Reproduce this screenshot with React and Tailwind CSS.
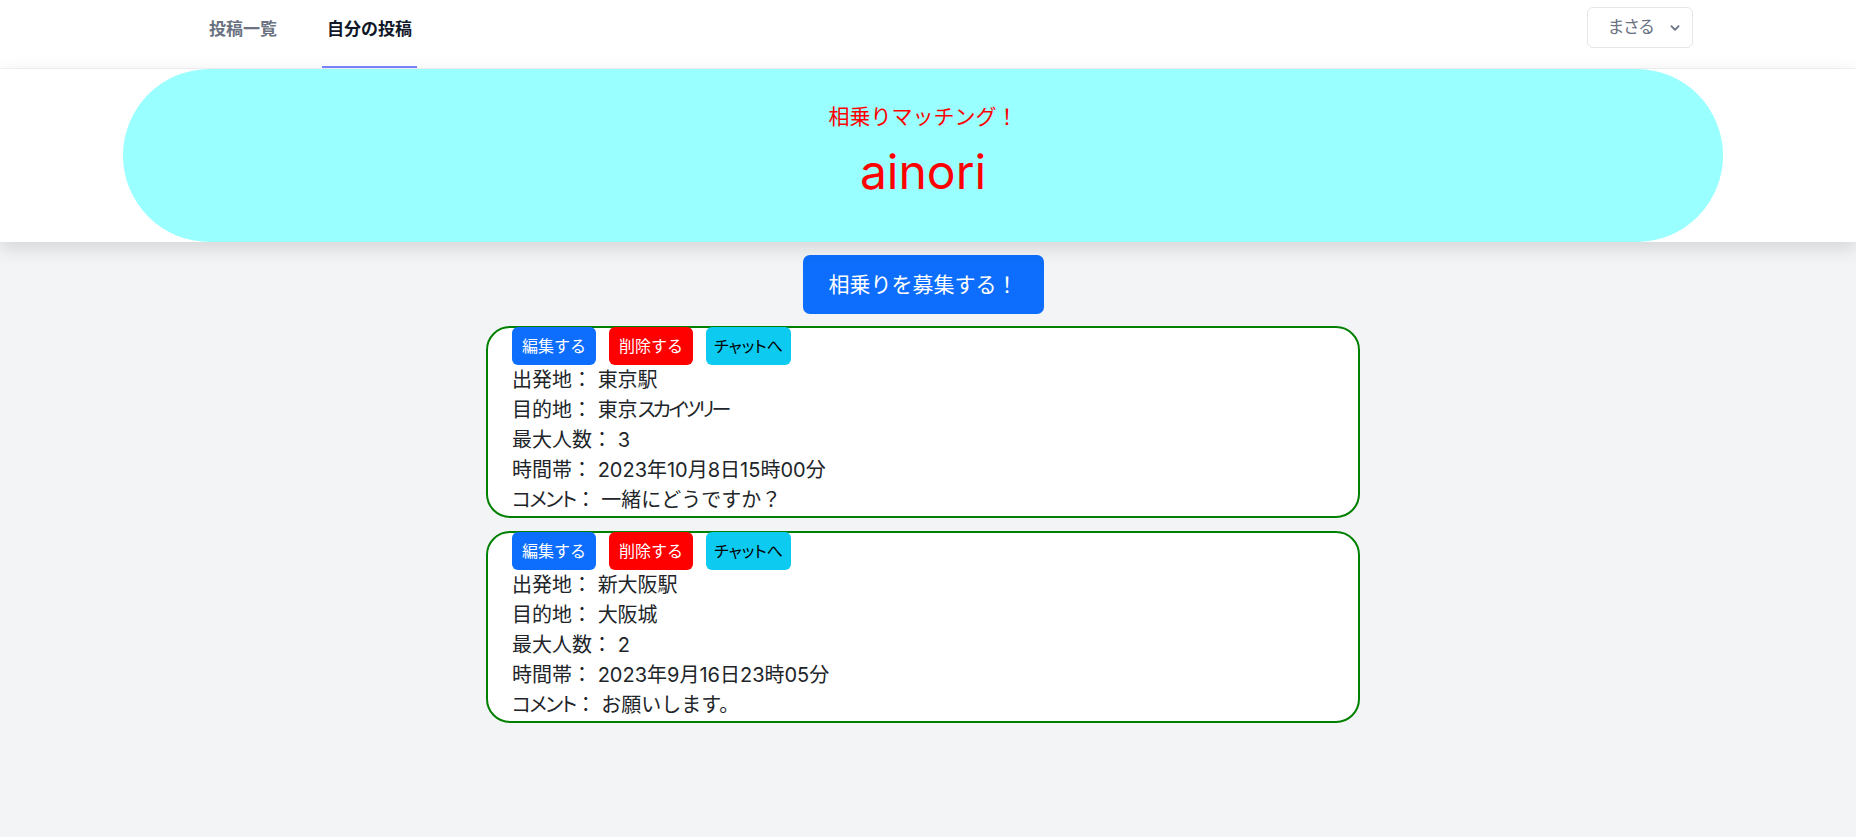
import React from "react";

const posts = [
  { from: "東京駅", toKanji: "東京", toKana: "スカイツリー", max: "3", time: "2023年10月8日15時00分", comment: "一緒にどうですか？" },
  { from: "新大阪駅", toKanji: "大阪城", toKana: "", max: "2", time: "2023年9月16日23時05分", comment: "お願いします。" },
];

function Row({ label, children, labelKana }) {
  return (
    <div className="h-[30px] leading-[30px] whitespace-pre">
      <span className={labelKana ? "tracking-[-1.5px] [font-feature-settings:'palt']" : ""}>{label}</span>
      <span>： </span>
      {children}
    </div>
  );
}

function Card({ p, className }) {
  return (
    <div className={"w-[874px] rounded-[24px] border-2 border-[#008000] bg-white pl-[24px] text-[20px] text-[#212529] " + className}>
      <div className="flex gap-[13px] -mt-[1px]">
        <button className="h-[38px] w-[84px] rounded-[6px] bg-[#0d6efd] text-[16px] text-white">編集する</button>
        <button className="h-[38px] w-[84px] rounded-[6px] bg-[#ff0000] text-[16px] text-white">削除する</button>
        <button className="h-[38px] w-[85px] rounded-[6px] bg-[#0dcaf0] text-[16px] text-black [font-feature-settings:'palt']">チャットへ</button>
      </div>
      <div className="pb-[1px]">
        <Row label="出発地">{p.from}</Row>
        <Row label="目的地">
          {p.toKanji}
          {p.toKana && <span className="tracking-[-3px] [font-feature-settings:'palt']">{p.toKana}</span>}
        </Row>
        <Row label="最大人数">{p.max}</Row>
        <Row label="時間帯">{p.time}</Row>
        <Row label="コメント" labelKana>{p.comment}</Row>
      </div>
    </div>
  );
}

export default function App() {
  return (
    <div className="min-h-screen bg-[#f3f4f6] [font-family:'Inter','Noto_Sans_CJK_JP',sans-serif]">
      <nav className="h-[69px] border-b border-gray-100 bg-white">
        <div className="flex h-[68px]">
          <div className="ml-[202px] flex h-full">
            <a className="flex h-full items-start border-b-2 border-transparent px-[7px] pt-[17px] text-[17px] font-semibold text-gray-500">
              投稿一覧
            </a>
            <a className="ml-[38px] flex h-full w-[95px] items-start justify-center border-b-2 border-indigo-400 pt-[17px] text-[17px] font-semibold text-gray-900">
              自分の投稿
            </a>
          </div>
          <div className="ml-auto mr-[163px] mt-[7px]">
            <button className="flex h-[41px] w-[106px] items-center rounded-[6px] border border-gray-200 bg-white pl-[20px] text-[17px] text-gray-500 [font-feature-settings:'palt']">
              <span>まさる</span>
              <svg className="ml-[12px] h-[18px] w-[18px] fill-current" viewBox="0 0 20 20">
                <path
                  fillRule="evenodd"
                  d="M5.293 7.293a1 1 0 011.414 0L10 10.586l3.293-3.293a1 1 0 111.414 1.414l-4 4a1 1 0 01-1.414 0l-4-4a1 1 0 010-1.414z"
                  clipRule="evenodd"
                />
              </svg>
            </button>
          </div>
        </div>
      </nav>

      <header className="relative bg-white shadow-[0_6px_18px_rgba(0,0,0,0.13)]">
        <div className="flex pl-[123px] pr-[133px]">
          <div className="flex h-[173px] flex-1 flex-col items-center rounded-full bg-[#99ffff] pt-[33px]">
            <div className="text-[21px] leading-[29px] text-[#ff0000]">相乗りマッチング！</div>
            <div className="mt-[12px] text-[48px] leading-[58px] text-[#ff0000]">ainori</div>
          </div>
        </div>
      </header>

      <main className="flex flex-col items-center pr-[10px] pb-10">
        <button className="mt-[13px] h-[59px] w-[241px] rounded-[7px] bg-[#0d6efd] text-[21px] text-white">
          相乗りを募集する！
        </button>
        <Card p={posts[0]} className="mt-[12px]" />
        <Card p={posts[1]} className="mt-[13px]" />
      </main>
    </div>
  );
}
